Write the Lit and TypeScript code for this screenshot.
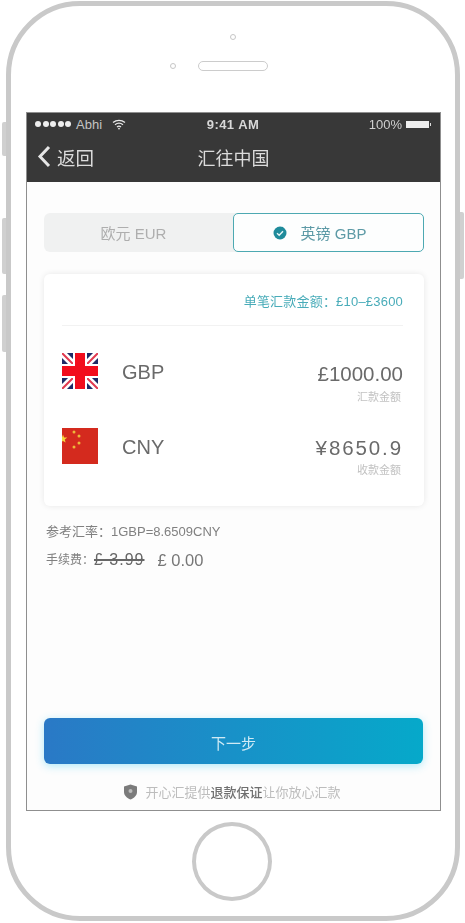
import { LitElement, html, css } from "lit";
import { customElement } from "lit/decorators.js";

@customElement("app-root")
export class AppRoot extends LitElement {
  static styles = css`
    :host {
      display: block;
      width: 465px;
      height: 923px;
      background: #fff;
      font-family: "Liberation Sans", "Noto Sans CJK SC", sans-serif;
      overflow: hidden;
      padding: 1px 0 0 6px;
      box-sizing: border-box;
    }
    .phone {
      position: relative;
      width: 454px;
      height: 920px;
      box-sizing: border-box;
      border: 5px solid #c9c9c9;
      border-radius: 74px;
      background: #fff;
      display: flex;
      flex-direction: column;
      align-items: center;
      filter: blur(0.35px);
    }
    .side { position: absolute; width: 4px; background: #d0d0d0; }
    .s1 { left: -9px; top: 116px; height: 34px; border-radius: 2px 0 0 2px; }
    .s2 { left: -9px; top: 212px; height: 56px; border-radius: 2px 0 0 2px; }
    .s3 { left: -9px; top: 289px; height: 57px; border-radius: 2px 0 0 2px; }
    .s4 { right: -9px; top: 206px; height: 67px; border-radius: 0 2px 2px 0; }
    .bezel-top {
      height: 106px;
      width: 100%;
      flex: none;
      display: flex;
      flex-direction: column;
      align-items: center;
      box-sizing: border-box;
      padding-top: 28px;
    }
    .camera {
      width: 6px; height: 6px; border-radius: 50%;
      border: 1px solid #c6c6c6; box-sizing: border-box;
    }
    .speaker-row { display: flex; align-items: center; gap: 22px; margin-top: 21px; }
    .speaker-gap { width: 6px; }
    .speaker {
      width: 70px; height: 10px; box-sizing: border-box;
      border: 1.5px solid #cccccc; border-radius: 5px;
    }
    .screen {
      width: 415px;
      height: 699px;
      flex: none;
      box-sizing: border-box;
      border: 1px solid #8f8f8f;
      background: #fdfdfd;
      display: flex;
      flex-direction: column;
      margin-left: 1px;
    }
    .head { background: #383838; color: #e4e4e4; height: 69px; flex: none; }
    .status {
      display: grid;
      grid-template-columns: 1fr auto 1fr;
      align-items: center;
      height: 22px;
      padding: 0 9px 0 8px;
      font-size: 13px;
    }
    .st-left { display: flex; align-items: center; gap: 5px; color: #c4c4c4; }
    .dots { display: flex; gap: 1.5px; }
    .dots i { width: 6px; height: 6px; border-radius: 50%; background: #eee; display: block; }
    .st-left svg { margin-left: 5px; }
    .time { font-weight: 700; font-size: 13px; color: #d8d8d8; letter-spacing: .45px; }
    .st-right { display: flex; justify-content: flex-end; align-items: center; gap: 4px; color: #cfcfcf; }
    .batt { width: 23px; height: 7px; background: #eee; position: relative; margin-right: 2px; }
    .batt::after {
      content: ""; position: absolute; right: -2px; top: 2px;
      width: 1.5px; height: 3px; background: #ddd;
    }
    .nav {
      display: grid;
      grid-template-columns: 1fr auto 1fr;
      align-items: center;
      height: 41px;
      padding-top: 2px;
      box-sizing: border-box;
      font-size: 18px;
      color: #dcdcdc;
    }
    .back { display: flex; align-items: center; gap: 6px; padding-left: 10px; font-size: 18.5px; }
    .body { flex: 1; display: flex; flex-direction: column; padding: 31px 16px 0 17px; min-height: 0; }
    .tabs {
      display: grid;
      grid-template-columns: 189px 191px;
      height: 39px;
      background: #f0f1f1;
      border-radius: 6px;
      font-size: 15px;
      flex: none;
    }
    .tab { display: flex; align-items: center; justify-content: center; color: #aeaeae; padding-right: 10px; }
    .tab.on {
      background: #fdfefe;
      border: 1.5px solid #4da9b2;
      border-radius: 5px;
      color: #5d9aa6;
      gap: 14px;
      box-sizing: border-box;
      padding-right: 18px;
    }
    .card {
      margin-top: 22px;
      height: 232px;
      flex: none;
      background: #fff;
      border-radius: 6px;
      box-shadow: 0 0 6px rgba(0, 0, 0, 0.09);
      padding: 0 21px 0 18px;
      box-sizing: border-box;
      width: 380px;
    }
    .limit {
      height: 52px;
      box-sizing: border-box;
      padding-top: 20px;
      text-align: right;
      font-size: 13px;
      line-height: 16px;
      letter-spacing: .2px;
      color: #49acb9;
      border-bottom: 1px solid #f2f2f2;
    }
    .row { display: flex; align-items: flex-start; height: 75px; }
    .rows { padding-top: 27px; }
    .flag { width: 36px; height: 36px; flex: none; display: block; }
    .code { margin-left: 24px; font-size: 20px; color: #6a6a6a; line-height: 38px; flex: 1; }
    .amt { text-align: right; }
    .val { font-size: 20.5px; line-height: 26px; color: #6a6a6a; margin-top: 7px; }
    .val.first { margin-top: 8px; }
    .val.wide { letter-spacing: 1.9px; }
    .sub { font-size: 11px; line-height: 14px; color: #c2c2c2; margin-top: 2px; padding-right: 2px; }
    .sub.first { margin-top: 3px; }
    .info { margin-top: 16px; margin-left: 2px; font-size: 13px; color: #808080; line-height: 20px; }
    .fee { margin-top: 8px; display: flex; align-items: center; font-size: 12px; }
    .old {
      text-decoration: line-through;
      text-decoration-thickness: 1.5px;
      color: #666;
      font-size: 16px;
      letter-spacing: 1px;
    }
    .new { font-size: 16.5px; margin-left: 13px; color: #777; }
    .spacer { flex: 1; }
    .btn {
      height: 46px;
      width: 379px;
      flex: none;
      box-sizing: border-box;
      padding-top: 3px;
      border-radius: 6px;
      background: linear-gradient(90deg, #2a79c6, #06a9ca);
      box-shadow: 0 2px 8px rgba(80, 210, 245, 0.45);
      color: #cfeaf5;
      font-size: 15px;
      display: flex;
      align-items: center;
      justify-content: center;
    }
    .note {
      height: 46px;
      flex: none;
      box-sizing: border-box;
      padding: 9px 3px 0 0;
      display: flex;
      align-items: center;
      justify-content: center;
      gap: 7px;
      font-size: 13px;
      color: #bdbdbd;
      width: 379px;
    }
    .note b { color: #6f6f6f; font-weight: 500; }
    .home {
      width: 80px; height: 79px; flex: none;
      border: 4px solid #c9c9c9; border-radius: 50%;
      box-sizing: border-box;
      margin-top: 11px;
      margin-right: 3px;
    }
  `;

  render() {
    return html`
      <div class="phone">
        <i class="side s1"></i><i class="side s2"></i><i class="side s3"></i><i class="side s4"></i>
        <div class="bezel-top">
          <div class="camera"></div>
          <div class="speaker-row">
            <div class="camera"></div>
            <div class="speaker"></div>
            <div class="speaker-gap"></div>
          </div>
        </div>
        <div class="screen">
          <div class="head">
            <div class="status">
              <div class="st-left">
                <span class="dots"><i></i><i></i><i></i><i></i><i></i></span>
                <span>Abhi</span>
                <svg width="14" height="11" viewBox="0 0 14 11" fill="none" stroke="#e8e8e8" stroke-width="1.3">
                  <path d="M1 3.6C4.5.6 9.5.6 13 3.6" />
                  <path d="M3 5.8c2.4-2 5.6-2 8 0" />
                  <path d="M5 7.9c1.2-1 2.8-1 4 0" />
                  <circle cx="7" cy="9.6" r=".9" fill="#e8e8e8" stroke="none" />
                </svg>
              </div>
              <div class="time">9:41 AM</div>
              <div class="st-right"><span>100%</span><span class="batt"></span></div>
            </div>
            <div class="nav">
              <div class="back">
                <svg width="14" height="23" viewBox="0 0 14 23" fill="none" stroke="#e6e6e6" stroke-width="3">
                  <path d="M12 2 3 11.5 12 21" />
                </svg>
                <span>返回</span>
              </div>
              <div>汇往中国</div>
              <div></div>
            </div>
          </div>
          <div class="body">
            <div class="tabs">
              <div class="tab">欧元 EUR</div>
              <div class="tab on">
                <svg width="14" height="14" viewBox="0 0 14 14">
                  <circle cx="7" cy="7" r="6.5" fill="#1f8b9b" />
                  <path d="M4 7.2 6.2 9.3 10 5.2" fill="none" stroke="#e8f6f7" stroke-width="1.4" />
                </svg>
                <span>英镑 GBP</span>
              </div>
            </div>
            <div class="card">
              <div class="limit">单笔汇款金额：£10–£3600</div>
              <div class="rows">
                <div class="row">
                  <svg class="flag" viewBox="0 0 36 36">
                    <rect width="36" height="36" fill="#1f2a66" />
                    <path d="M0 0 36 36M36 0 0 36" stroke="#fff" stroke-width="7" />
                    <path d="M0 0 36 36M36 0 0 36" stroke="#e23a50" stroke-width="2" />
                    <path d="M18 0V36M0 18H36" stroke="#fff" stroke-width="14" />
                    <path d="M18 0V36M0 18H36" stroke="#f20d1c" stroke-width="10" />
                  </svg>
                  <div class="code">GBP</div>
                  <div class="amt">
                    <div class="val first">£1000.00</div>
                    <div class="sub first">汇款金额</div>
                  </div>
                </div>
                <div class="row">
                  <svg class="flag" viewBox="0 0 36 36">
                    <rect width="36" height="36" fill="#d42a1e" />
                    <polygon points="1,6.5 2.1,9.5 5.3,9.6 2.8,11.6 3.6,14.6 1,12.9 -1.6,14.6 -0.8,11.6 -3.3,9.6 -0.1,9.5" fill="#f5d33c" />
                    <circle cx="12" cy="4" r="1.5" fill="#eeb83a" />
                    <circle cx="17" cy="8" r="1.5" fill="#eeb83a" />
                    <circle cx="17" cy="15" r="1.5" fill="#eeb83a" />
                    <circle cx="12" cy="19" r="1.5" fill="#eeb83a" />
                  </svg>
                  <div class="code">CNY</div>
                  <div class="amt">
                    <div class="val wide">¥8650.9</div>
                    <div class="sub">收款金额</div>
                  </div>
                </div>
              </div>
            </div>
            <div class="info">
              <div>参考汇率：1GBP=8.6509CNY</div>
              <div class="fee">手续费：<span class="old">£ 3.99</span><span class="new">£ 0.00</span></div>
            </div>
            <div class="spacer"></div>
            <div class="btn">下一步</div>
            <div class="note">
              <svg width="15" height="16" viewBox="0 0 15 16">
                <path d="M7.5 0.5 14 2.5V8c0 3.6-3 6-6.5 7.5C4 14 1 11.6 1 8V2.5Z" fill="#7b7b7b" />
                <circle cx="7.5" cy="7" r="2" fill="#bdbdbd" />
              </svg>
              <span>开心汇提供<b>退款保证</b>让你放心汇款</span>
            </div>
          </div>
        </div>
        <div class="home"></div>
      </div>
    `;
  }
}
